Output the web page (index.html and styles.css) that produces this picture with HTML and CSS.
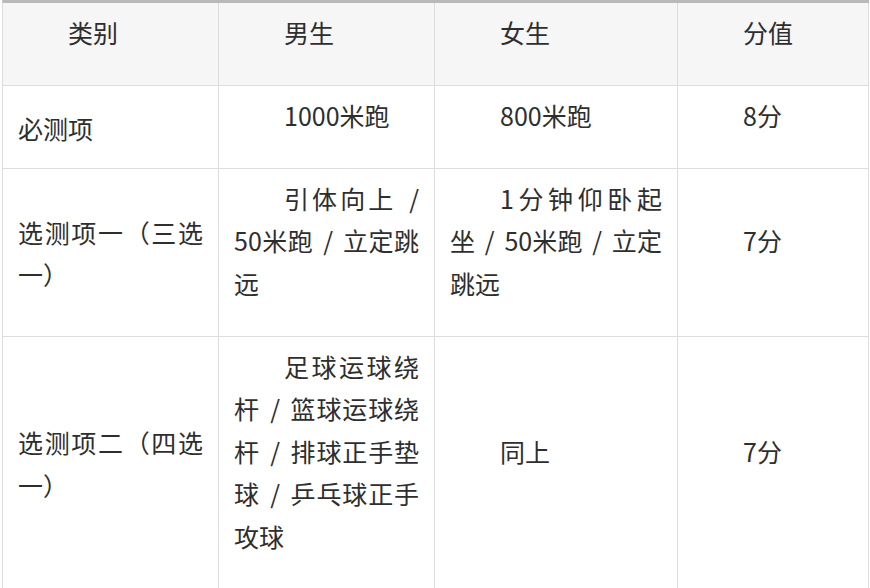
FILE: index.html
```html
<!DOCTYPE html>
<html lang="zh-CN">
<head>
<meta charset="utf-8">
<title>体育考试项目</title>
<link rel="stylesheet" href="styles.css">
</head>
<body>
<table class="score-table">
  <thead>
    <tr>
      <th class="c1"><p>类别</p></th>
      <th class="c2"><p>男生</p></th>
      <th class="c3"><p>女生</p></th>
      <th class="c4"><p>分值</p></th>
    </tr>
  </thead>
  <tbody>
    <tr>
      <td class="cat">必测项</td>
      <td><p>1000米跑</p></td>
      <td><p>800米跑</p></td>
      <td><p>8分</p></td>
    </tr>
    <tr>
      <td class="cat">选测项一（三选一）</td>
      <td><p>引体向上 / 50米跑 / 立定跳远</p></td>
      <td><p>1分钟仰卧起坐 / 50米跑 / 立定跳远</p></td>
      <td><p>7分</p></td>
    </tr>
    <tr>
      <td class="cat">选测项二（四选一）</td>
      <td><p>足球运球绕杆 / 篮球运球绕杆 / 排球正手垫球 / 乒乓球正手攻球</p></td>
      <td><p>同上</p></td>
      <td><p>7分</p></td>
    </tr>
  </tbody>
</table>
</body>
</html>
```

FILE: styles.css
```css
html, body {
  margin: 0;
  padding: 0;
  background: #ffffff;
}

body {
  font-family: "Noto Sans CJK SC", "Noto Sans", sans-serif;
  font-size: 25px;
  line-height: 42.5px;
  color: #2e2e2e;
}

.score-table {
  margin-left: 2px;
  border-collapse: separate;
  border-spacing: 0;
  table-layout: fixed;
  width: 867px;
  border-left: 1px solid #dddddd;
  border-top: 3px solid #b9b9b9;
}

.score-table th,
.score-table td {
  box-sizing: border-box;
  padding: 7.5px 15px 12px;
  border-right: 1px solid #dddddd;
  border-bottom: 1px solid #dddddd;
  vertical-align: middle;
  text-align: justify;
  font-weight: normal;
  word-spacing: 4px;
}

.score-table td.cat {
  padding: 10.5px 15px 9px;
}

.score-table th {
  background: #f6f6f6;
}

.c1 { width: 216px; }
.c2 { width: 216px; }
.c3 { width: 243px; }
.c4 { width: 191px; }

.score-table p {
  margin: 0 0 20px 0;
  text-indent: 2em;
  text-align: justify;
}
```
